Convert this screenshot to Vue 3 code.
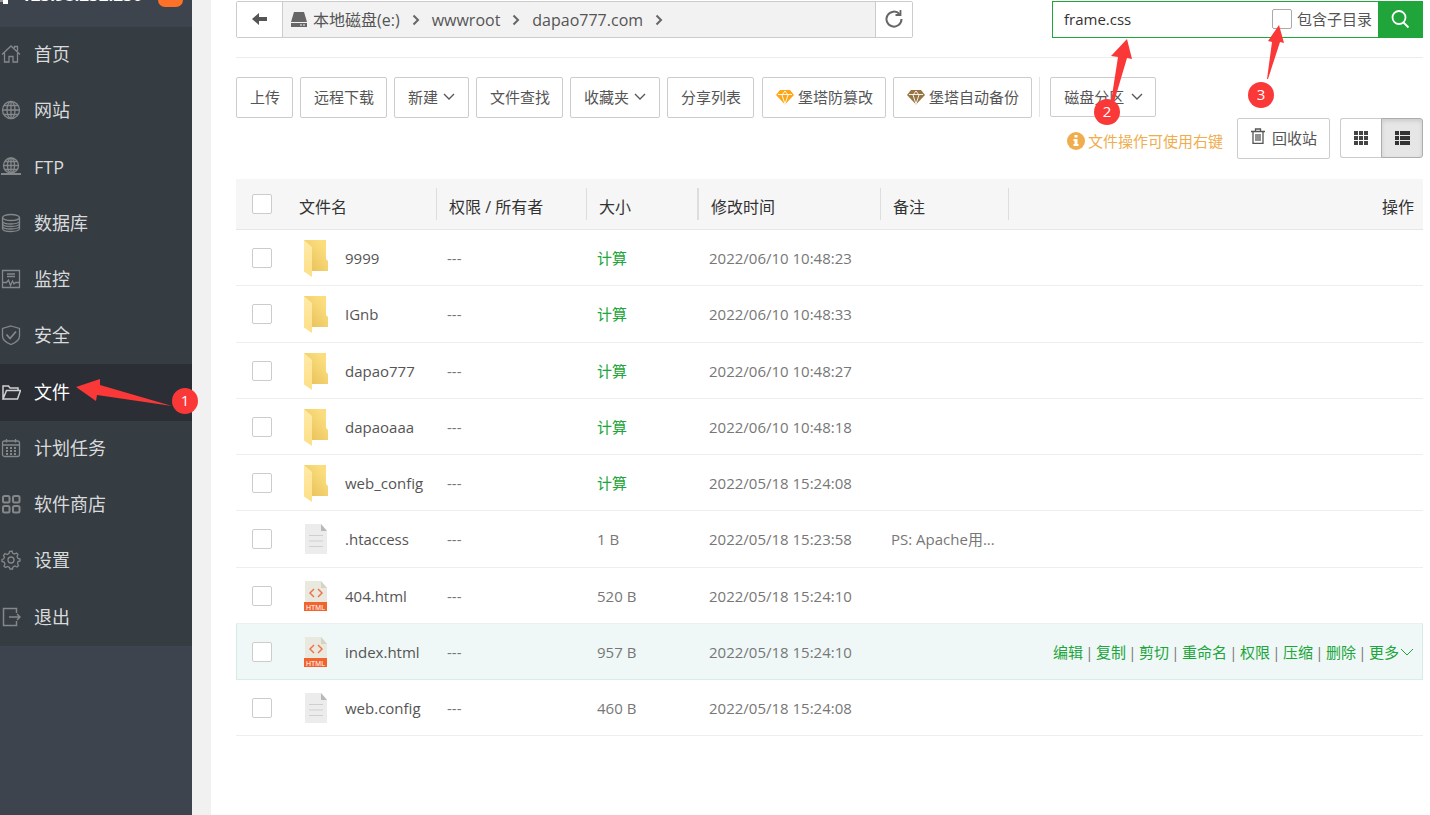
<script setup>
import { ref } from 'vue'

const menu = [
  { name: '首页', icon: 'home' },
  { name: '网站', icon: 'globe' },
  { name: 'FTP', icon: 'ftp' },
  { name: '数据库', icon: 'db' },
  { name: '监控', icon: 'monitor' },
  { name: '安全', icon: 'shield' },
  { name: '文件', icon: 'folder', active: true },
  { name: '计划任务', icon: 'calendar' },
  { name: '软件商店', icon: 'apps' },
  { name: '设置', icon: 'gear' },
  { name: '退出', icon: 'exit' },
]

const tools = [
  { name: '上传' },
  { name: '远程下载' },
  { name: '新建', caret: true },
  { name: '文件查找' },
  { name: '收藏夹', caret: true },
  { name: '分享列表' },
  { name: '堡塔防篡改', gem: 'gold', gap: true },
  { name: '堡塔自动备份', gem: 'bronze' },
]

const files = [
  { name: '9999', type: 'dir', time: '2022/06/10 10:48:23' },
  { name: 'IGnb', type: 'dir', time: '2022/06/10 10:48:33' },
  { name: 'dapao777', type: 'dir', time: '2022/06/10 10:48:27' },
  { name: 'dapaoaaa', type: 'dir', time: '2022/06/10 10:48:18' },
  { name: 'web_config', type: 'dir', time: '2022/05/18 15:24:08' },
  { name: '.htaccess', type: 'txt', size: '1 B', time: '2022/05/18 15:23:58', note: 'PS: Apache用...' },
  { name: '404.html', type: 'html', size: '520 B', time: '2022/05/18 15:24:10' },
  { name: 'index.html', type: 'html', size: '957 B', time: '2022/05/18 15:24:10', hover: true },
  { name: 'web.config', type: 'txt', size: '460 B', time: '2022/05/18 15:24:08' },
]

const actions = ['编辑', '复制', '剪切', '重命名', '权限', '压缩', '删除']
const crumbs = ['wwwroot', 'dapao777.com']
const keyword = ref('frame.css')
</script>

<template>
  <div class="layout">
    <aside class="sidebar">
      <div class="server">
        <svg class="server-icon" viewBox="0 0 8 6" width="8" height="6"><path d="M0 0h3v2H0z" fill="#8f949a" /><path d="M3 0h5v4H3z" fill="#fff" /></svg>
        <span class="server-ip">123.98.232.230</span>
        <span class="server-badge"></span>
      </div>
      <nav class="menu">
        <a v-for="m in menu" :key="m.name" href="#" class="menu-item" :class="{ active: m.active }">
          <svg class="menu-icon" viewBox="0 0 20 20" width="20" height="20" fill="none" stroke="currentColor" stroke-width="1.3">
            <template v-if="m.icon === 'home'">
              <path d="M1 10.500 10 2l9 8.500M3.500 9v9h4.500v-5.500h4V18h4.500V9M13.500 4V2.500h3V7" />
            </template>
            <template v-else-if="m.icon === 'globe'">
              <circle cx="10" cy="10" r="8.500" />
              <ellipse cx="10" cy="10" rx="4" ry="8.500" />
              <path d="M10 1.500v17M1.500 10h17M3 5.500h14M3 14.500h14" />
            </template>
            <template v-else-if="m.icon === 'ftp'">
              <circle cx="10" cy="8.500" r="7.500" />
              <ellipse cx="10" cy="8.500" rx="3.500" ry="7.500" />
              <path d="M10 1v15M2.500 8.500h15M4 4.500h12M4 12.500h12" />
              <path d="M0 17h20M7.500 17h5" stroke-width="2" />
            </template>
            <template v-else-if="m.icon === 'db'">
              <ellipse cx="10" cy="4.500" rx="8.500" ry="3" />
              <path d="M1.500 4.500v11c0 4 17 4 17 0v-11M1.500 8c0 4 17 4 17 0M1.500 10.500c0 4 17 4 17 0M1.500 13c0 4 17 4 17 0" />
            </template>
            <template v-else-if="m.icon === 'monitor'">
              <path d="M1.500 1.500h17v17h-17zM6 5h8M6 7.500h8M2 13.500h3.500l2-2.500 2 5.500 2-4.500 1.500 3 1.500-1.500H18" />
            </template>
            <template v-else-if="m.icon === 'shield'">
              <path d="M10 1 18.500 3.500V11c0 4-4.500 7-8.500 8.500C6 18 1.500 15 1.500 11V3.500z" />
              <path d="m5.500 9.500 3.500 4 6-7" stroke-width="1.800" />
            </template>
            <template v-else-if="m.icon === 'folder'">
              <path d="M2 17V4h5.500l1.500 2h8v2.500M2 17 5.500 8.500H19.500L16.500 17z" stroke-width="1.500" />
            </template>
            <template v-else-if="m.icon === 'calendar'">
              <rect x="1.500" y="3" width="17" height="15.500" rx="2" />
              <path d="M1.500 7h17M5.500 1v3.500M14.500 1v3.500" />
              <path d="M5 10h10M5 13h10M5 16h10" stroke-dasharray="2 2" stroke-width="2" />
            </template>
            <template v-else-if="m.icon === 'apps'">
              <g stroke-width="2">
                <rect x="2" y="2" width="6.500" height="6.500" rx="1.500" />
                <rect x="12" y="2" width="6.500" height="6.500" rx="1.500" />
                <rect x="2" y="12" width="6.500" height="6.500" rx="1.500" />
                <rect x="12" y="12" width="6.500" height="6.500" rx="1.500" />
              </g>
            </template>
            <template v-else-if="m.icon === 'gear'">
              <circle cx="10" cy="10" r="3" />
              <path d="m8.500 1.500-.5 2-2 1-2-1-1.500 2 1 2-1 1.500-1.500.5v2l2 .5 1 2-1 2 1.500 1.500 2-1 2 1 .5 1.500h2.500l.5-2 2-1 2 1 1.500-1.500-1-2 .5-2 2-.5v-2l-2-.5-1-2 1-2-1.500-1.500-2 1-2-1-.5-2z" />
            </template>
            <template v-else>
              <path d="M15.500 6V1.500h-13v17h13V14M8 10h11M16 7l3 3-3 3" stroke-width="1.500" />
            </template>
          </svg>
          <span>{{ m.name }}</span>
        </a>
      </nav>
    </aside>

    <main class="content">
      <div class="pathbar">
        <div class="path">
          <button class="path-btn back" aria-label="返回">
            <svg viewBox="0 0 16 14" width="16" height="14"><path d="M0 6 7 0v4h8v4H7v4z" fill="#555" /></svg>
          </button>
          <div class="crumbs">
            <a href="#" class="crumb disk">
              <svg viewBox="0 0 18 18" width="18" height="18" fill="#666"><path d="M4 1h10l3 10H1z" /><path fill-rule="evenodd" d="M1 12h16v4H1zm9 1.500v1h2v-1zm3 0v1h2v-1z" /></svg>
              本地磁盘(e:)
            </a>
            <template v-for="c in crumbs" :key="c">
              <svg class="sep" viewBox="0 0 8 12" width="8" height="12"><path d="m1.500 1.500 4.500 4.500-4.500 4.500" /></svg>
              <a href="#" class="crumb">{{ c }}</a>
            </template>
            <svg class="sep" viewBox="0 0 8 12" width="8" height="12"><path d="m1.500 1.500 4.500 4.500-4.500 4.500" /></svg>
          </div>
          <button class="path-btn refresh" aria-label="刷新">
            <svg viewBox="0 0 20 20" width="20" height="20" fill="none" stroke="#666" stroke-width="2"><path d="M15.500 4A7.500 7.500 0 1 0 17.500 9" /><path d="M16.500 0v5h-5" stroke-width="1.800" /></svg>
          </button>
        </div>
        <form class="search" @submit.prevent>
          <input v-model="keyword" class="search-input" type="text" aria-label="搜索文件" />
          <label class="subdir"><input type="checkbox" class="box" />包含子目录</label>
          <button class="search-btn" aria-label="搜索">
            <svg viewBox="0 0 20 20" width="20" height="20" fill="none" stroke="#fff" stroke-width="1.800"><circle cx="9" cy="7.500" r="6.500" /><path d="m13.500 12.500 5 5" /></svg>
          </button>
        </form>
      </div>

      <div class="toolbar">
        <div class="tools">
          <button v-for="t in tools" :key="t.name" class="btn" :class="{ spaced: t.gap }">
            <svg v-if="t.gem" class="gem" :class="t.gem" viewBox="0 0 18 16" width="18" height="16">
              <path d="M4 1h10l4 5-9 9.500L0 6z" fill="currentColor" />
              <path d="M2 5.500h14M6 6l3-4 3 4M6 6l3 9 3-9" fill="none" stroke="#fff" stroke-width=".9" />
            </svg>
            {{ t.name }}
            <svg v-if="t.caret" class="caret" viewBox="0 0 12 8" width="12" height="8"><path d="m1 1 5 5 5-5" /></svg>
          </button>
          <span class="divider"></span>
          <button class="btn disk-btn">
            磁盘分区
            <svg class="caret" viewBox="0 0 12 8" width="12" height="8"><path d="m1 1 5 5 5-5" /></svg>
          </button>
        </div>
        <div class="tools-right">
          <span class="tip">
            <svg viewBox="0 0 18 18" width="18" height="18"><circle cx="9" cy="9" r="9" fill="#f0ad4e" /><path d="M7.500 3h3v2.500h-3zM6.500 7h4v5h1v2h-5v-2h1V9h-1z" fill="#fff" /></svg>
            文件操作可使用右键
          </span>
          <button class="btn recycle">
            <svg viewBox="0 0 14 20" width="14" height="20" fill="none" stroke="#555" stroke-width="1.300"><path d="M0 3.500h14M4.500 3V1h5v2M2 4v11.300h10V4M5 6v7M7 6v7M9 6v7" /></svg>
            回收站
          </button>
          <div class="views">
            <button class="view" aria-label="图标视图">
              <svg viewBox="0 0 14 14" width="14" height="14" fill="#444"><path d="M0 0h4v4H0zM5 0h4v4H5zM10 0h4v4h-4zM0 5h4v4H0zM5 5h4v4H5zM10 5h4v4h-4zM0 10h4v4H0zM5 10h4v4H5zM10 10h4v4h-4z" /></svg>
            </button>
            <button class="view on" aria-label="列表视图">
              <svg viewBox="0 0 15 14" width="15" height="14" fill="#333"><path d="M0 0h4v4H0zM5 0h10v4H5zM0 5h4v4H0zM5 5h10v4H5zM0 10h4v4H0zM5 10h10v4H5z" /></svg>
            </button>
          </div>
        </div>
      </div>

      <table class="files">
        <colgroup>
          <col class="c-check" /><col class="c-name" /><col class="c-perm" /><col class="c-size" /><col class="c-time" /><col class="c-note" /><col />
        </colgroup>
        <thead>
          <tr>
            <th class="check"><input type="checkbox" class="box" aria-label="全选" /></th>
            <th><span class="head-name">文件名</span></th>
            <th><span>权限 / 所有者</span></th>
            <th><span class="thick">大小</span></th>
            <th><span>修改时间</span></th>
            <th><span>备注</span></th>
            <th class="ops">操作</th>
          </tr>
        </thead>
        <tbody>
          <tr v-for="f in files" :key="f.name" :class="{ hover: f.hover }">
            <td class="check"><input type="checkbox" class="box" :aria-label="f.name" /></td>
            <td>
              <div class="file">
                <svg v-if="f.type === 'dir'" viewBox="0 0 26 38" width="26" height="38">
                  <defs>
                    <linearGradient id="dirBack" x1="0" y1="1" x2="1" y2="0"><stop offset=".2" stop-color="#ebc55f" /><stop offset=".8" stop-color="#fbdd7e" /></linearGradient>
                    <linearGradient id="dirFlap" x1="0" y1="0" x2="0" y2="1"><stop offset="0" stop-color="#ffeaa8" /><stop offset="1" stop-color="#fddf86" /></linearGradient>
                  </defs>
                  <path d="M1 1h22v19l2 2v10H1z" fill="url(#dirBack)" />
                  <path d="M1 1 9 8v30l-8-5.500z" fill="url(#dirFlap)" />
                </svg>
                <svg v-else-if="f.type === 'txt'" viewBox="0 0 26 32" width="26" height="32">
                  <path d="M2 1h16l6 7v23H2z" fill="#ececec" />
                  <path d="M18 1l6 7h-6z" fill="#b8b8b8" />
                  <path d="M6 12.500h14M6 18h14M6 23.500h14" stroke="#cfcfcf" />
                </svg>
                <svg v-else viewBox="0 0 26 32" width="26" height="32">
                  <path d="M2 1h16l6 7v23H2z" fill="#e9e9e0" />
                  <path d="M18 1l6 7h-6z" fill="#d3d4c4" />
                  <path d="m11 9-4 4 4 4m4-8 4 4-4 4" fill="none" stroke="#f0744a" stroke-width="1.500" />
                  <path d="M1 22h23v9H1z" fill="#f1642e" />
                  <text x="12.500" y="29.500" class="html-tag" text-anchor="middle">HTML</text>
                </svg>
                <a href="#" class="file-name">{{ f.name }}</a>
              </div>
            </td>
            <td>---</td>
            <td><a v-if="f.type === 'dir'" href="#" class="green">计算</a><template v-else>{{ f.size }}</template></td>
            <td>{{ f.time }}</td>
            <td>{{ f.note }}</td>
            <td class="ops">
              <div v-if="f.hover" class="actions">
                <template v-for="a in actions" :key="a"><a href="#" class="green">{{ a }}</a><i>|</i></template>
                <a href="#" class="green">更多</a>
                <svg class="more" viewBox="0 0 14 8" width="14" height="8"><path d="m1 1 6 6 6-6" /></svg>
              </div>
            </td>
          </tr>
        </tbody>
      </table>
    </main>

    <div class="mark mark-1">
      <svg viewBox="0 0 120 40" width="120" height="40"><path d="M0 8 24 0v6l72 21-75-11-1 6z" /></svg>
      <b>1</b>
    </div>
    <div class="mark mark-2">
      <svg viewBox="0 0 40 70" width="40" height="70"><path d="M32 0l5 20-5-1-13 44h-3l7-45-7-1z" /></svg>
      <b>2</b>
    </div>
    <div class="mark mark-3">
      <svg viewBox="0 0 40 60" width="40" height="60"><path d="M26 0l5 18-4-1-12 37h-1l5-37-4-1z" /></svg>
      <b>3</b>
    </div>
  </div>
</template>

<style>
body {
  background: #fff;
}
</style>

<style scoped>
* {
  box-sizing: border-box;
}
.layout {
  position: relative;
  display: flex;
  min-height: 100vh;
  overflow: hidden;
  font: 15px/20px "Open Sans", "Noto Sans CJK SC", sans-serif;
  color: #555;
}
svg {
  display: block;
  flex: none;
}
a {
  color: inherit;
  text-decoration: none;
}
button {
  font: inherit;
  color: inherit;
  cursor: pointer;
}
.sidebar {
  flex: none;
  width: 192px;
  background: #3d444e;
}
.server {
  display: flex;
  align-items: flex-start;
  height: 27px;
  color: #fff;
  font-size: 17px;
  font-weight: 700;
}
.server-icon {
  margin-right: 13px;
}
.server-ip {
  margin-top: -15px;
}
.server-badge {
  width: 25px;
  height: 20px;
  margin: -13px 9px 0 auto;
  border-radius: 7px;
  background: #ff7029;
}
.menu-item {
  display: flex;
  align-items: center;
  gap: 13px;
  height: 56px;
  padding: 0 0 2px 1px;
  background: #353c42;
  color: #85888a;
  font-size: 18px;
}
.menu-item:nth-child(4n + 3) {
  height: 57px;
}
.menu-item span {
  color: #d8dadb;
}
.menu-item.active {
  background: #2b2e35;
  color: #d0d0d0;
}
.menu-item.active span {
  color: #fff;
}
.content {
  flex: 1;
  min-width: 0;
  padding: 1px 7px 0 25px;
  border-left: 19px solid #f1f1f1;
}
.pathbar {
  display: flex;
  justify-content: space-between;
  padding-bottom: 19px;
  border-bottom: 1px solid #ececec;
}
.path {
  display: flex;
  width: 677px;
  height: 37px;
  border: 1px solid #ccc;
  border-radius: 2px;
}
.path-btn {
  display: grid;
  place-items: center;
  padding: 0;
  border: 0;
  background: #fff;
}
.back {
  width: 46px;
  border-right: 1px solid #ccc;
}
.refresh {
  width: 37px;
  border-left: 1px solid #ccc;
}
.crumbs {
  display: flex;
  flex: 1;
  align-items: center;
  gap: 12px;
  padding-left: 7px;
  background: #f2f2f2;
  font-size: 16px;
}
.disk {
  display: flex;
  align-items: center;
  gap: 5px;
}
.sep {
  fill: none;
  stroke: #666;
  stroke-width: 2;
}
.search {
  display: flex;
  width: 371px;
  height: 37px;
  border: 1px solid #20a53a;
}
.search-input {
  flex: 1;
  min-width: 0;
  padding: 0 0 2px 11px;
  border: 0;
  outline: 0;
  background: transparent;
  color: #333;
  font: inherit;
}
.subdir {
  display: flex;
  align-items: center;
  gap: 5px;
  margin-right: 6px;
  padding-bottom: 1px;
}
.box {
  flex: none;
  width: 20px;
  height: 20px;
  margin: 0;
  border: 1px solid #ccc;
  border-radius: 2px;
  background: #fff;
  appearance: none;
}
.subdir .box {
  border-color: #aaa;
}
.search-btn {
  display: grid;
  place-items: center;
  width: 44px;
  padding: 0;
  border: 0;
  background: #20a53a;
}
.toolbar {
  padding-top: 19px;
}
.tools {
  display: flex;
  gap: 7px;
}
.btn {
  display: flex;
  align-items: center;
  height: 41px;
  padding: 0 12px 1px 13px;
  border: 1px solid #ccc;
  border-radius: 2px;
  background: #fff;
  white-space: nowrap;
}
.spaced {
  margin-left: 1px;
}
.caret {
  margin: 0 1px 0 5px;
  fill: none;
  stroke: #555;
  stroke-width: 1.3;
}
.gem {
  margin-right: 4px;
}
.gold {
  color: #ffa616;
}
.bronze {
  color: #967444;
}
.divider {
  width: 1px;
  height: 40px;
  background: #e4e4e4;
}
.disk-btn {
  height: 40px;
  margin-left: 3px;
}
.disk-btn .caret {
  margin: 0 0 0 7px;
}
.tools-right {
  display: flex;
  justify-content: flex-end;
}
.tip {
  display: flex;
  align-items: center;
  gap: 3px;
  margin-right: 14px;
  padding-top: 4px;
  color: #f0ad4e;
}
.recycle {
  gap: 7px;
}
.views {
  display: flex;
  height: 40px;
  margin-left: 10px;
}
.view {
  display: grid;
  place-items: center;
  width: 41px;
  padding: 0;
  border: 1px solid #ccc;
  border-right: 0;
  border-radius: 3px 0 0 3px;
  background: #fff;
}
.view.on {
  width: 42px;
  border: 1px solid #adadad;
  border-radius: 0 3px 3px 0;
  background: #e6e6e6;
  box-shadow: inset 0 2px 4px rgb(0 0 0 / 12%);
}
.files {
  width: 100%;
  margin-top: 20px;
  border-collapse: separate;
  border-spacing: 0;
  table-layout: fixed;
  color: #777;
}
.c-check { width: 52px; }
.c-name { width: 149px; }
.c-perm { width: 150px; }
.c-size { width: 112px; }
.c-time { width: 182px; }
.c-note { width: 128px; }
th {
  height: 51px;
  padding: 0;
  border-bottom: 1px solid #e6e6e6;
  background: #f6f6f6;
  color: #333;
  font-size: 16px;
  font-weight: 400;
  text-align: left;
}
th span {
  display: block;
  padding: 7px 12px 0;
  border-right: 1px solid #ddd;
  line-height: 25px;
}
th .head-name {
  padding-left: 11px;
}
th .thick {
  border-right-width: 2px;
}
td {
  height: 56px;
  padding: 0 10px;
  border-bottom: 1px solid #eee;
  white-space: nowrap;
}
tr:nth-child(4n + 2) td {
  height: 57px;
}
th.check,
td.check {
  padding: 0 0 0 16px;
}
.check .box {
  display: block;
}
.file {
  display: flex;
  align-items: center;
  gap: 16px;
  margin-left: 5px;
}
.file-name {
  color: #555;
}
.html-tag {
  fill: #fff;
  font: 7px "Liberation Sans", sans-serif;
}
.green {
  color: #20a53a;
}
th.ops,
td.ops {
  padding-right: 9px;
  text-align: right;
}
th.ops {
  padding-top: 6px;
}
.actions {
  display: flex;
  align-items: center;
  justify-content: flex-end;
}
.actions i {
  width: 13px;
  font-style: normal;
  text-align: center;
}
.more {
  margin-left: 1px;
  fill: none;
  stroke: #20a53a;
}
.hover td {
  border-bottom-color: #d9ede7;
  background: #eff8f7;
}
.hover td:first-child {
  border-left: 1px solid #d5ebe6;
}
.hover td.check {
  padding-left: 15px;
}
.hover td:last-child {
  border-right: 1px solid #d5ebe6;
  padding-right: 8px;
}
.mark {
  position: absolute;
  fill: #fb3838;
}
.mark b {
  position: absolute;
  width: 26px;
  height: 26px;
  border-radius: 50%;
  background: #fb3838;
  color: #fff;
  font-weight: 400;
  line-height: 25px;
  text-align: center;
}
.mark-1 { left: 76px; top: 379px; }
.mark-1 b { left: 96px; top: 9px; }
.mark-2 { left: 1095px; top: 39px; }
.mark-2 b { left: -1px; top: 60px; }
.mark-3 { left: 1253px; top: 25px; }
.mark-3 b { left: -5px; top: 57px; }
</style>
